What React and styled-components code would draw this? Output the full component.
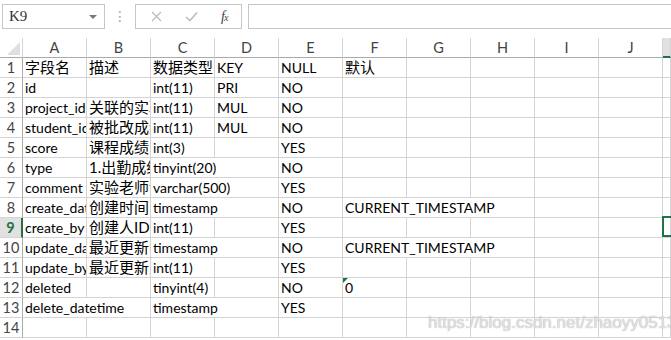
import React from 'react';
import styled, { createGlobalStyle } from 'styled-components';

const GlobalStyle = createGlobalStyle`
  html, body {
    margin: 0;
    padding: 0;
    background: #fff;
  }
`;

const Sheet = styled.div`
  position: relative;
  width: 671px;
  height: 340px;
  overflow: hidden;
  background: #fff;
  font-family: "Lato", "Noto Sans CJK SC", sans-serif;
`;

const FormulaBar = styled.div`
  display: flex;
  align-items: flex-start;
  height: 38px;
  box-sizing: border-box;
  padding: 4px 0 0 2px;
`;

const NameBox = styled.div`
  position: relative;
  width: 103px;
  height: 25px;
  box-sizing: border-box;
  border: 1px solid #c6c6c6;
  font-family: "Liberation Serif", serif;
  font-size: 15px;
  color: #333;
  padding: 3px 0 0 6px;
  &::after {
    content: "";
    position: absolute;
    right: 7px;
    top: 10px;
    border-left: 4px solid transparent;
    border-right: 4px solid transparent;
    border-top: 4px solid #777;
  }
`;

const Dots = styled.div`
  width: 30px;
  text-align: center;
  color: #a0a0a0;
  font-size: 14px;
  line-height: 25px;
  font-family: "DejaVu Sans", sans-serif;
`;

const ButtonBox = styled.div`
  display: flex;
  align-items: center;
  width: 107px;
  height: 25px;
  box-sizing: border-box;
  border: 1px solid #c6c6c6;
  padding-left: 15px;
  gap: 23px;
`;

const Fx = styled.span`
  font-family: "Liberation Serif", serif;
  font-style: italic;
  font-size: 14px;
  color: #444;
  letter-spacing: -1px;
  & sub {
    font-size: 10px;
    vertical-align: 0;
  }
`;

const FormulaInput = styled.div`
  flex: 1;
  height: 25px;
  box-sizing: border-box;
  border: 1px solid #c6c6c6;
  border-right: none;
  margin-left: 6px;
`;

const Row = styled.div`
  display: grid;
  grid-template-columns: 23px repeat(10, 64px) 1fr;
  height: 20px;
`;

const Corner = styled.div`
  position: relative;
  border-right: 1px solid #d4d4d4;
  border-bottom: 1px solid #ababab;
  &::after {
    content: "";
    position: absolute;
    right: 2px;
    bottom: 2px;
    border-left: 13px solid transparent;
    border-bottom: 13px solid #dfdfdf;
  }
`;

const ColHead = styled.div`
  display: flex;
  align-items: flex-end;
  justify-content: center;
  box-sizing: border-box;
  padding-bottom: 1px;
  font-size: 14.5px;
  color: #444;
  border-right: 1px solid #d4d4d4;
  border-bottom: ${p => (p.$active ? '2px solid #217346' : '1px solid #ababab')};
  background: ${p => (p.$active ? '#e1e1e1' : '#fff')};
`;

const RowHead = styled.div`
  display: flex;
  align-items: flex-end;
  justify-content: center;
  box-sizing: border-box;
  padding-bottom: 1px;
  font-size: 14.5px;
  color: ${p => (p.$active ? '#217346' : '#444')};
  font-weight: ${p => (p.$active ? 700 : 400)};
  background: ${p => (p.$active ? '#e1e1e1' : '#fff')};
  border-right: ${p => (p.$active ? '2px solid #217346' : '1px solid #ababab')};
  border-bottom: 1px solid #d4d4d4;
`;

const Cell = styled.div`
  position: relative;
  grid-column: span ${p => p.$span || 1};
  display: flex;
  align-items: flex-end;
  box-sizing: border-box;
  padding: 0 0 ${p => (p.$cjk ? 0 : 1)}px 2px;
  font-size: ${p => (p.$cjk ? 15 : 14)}px;
  color: #000;
  white-space: nowrap;
  overflow: hidden;
  border-right: 1px solid #d4d4d4;
  border-bottom: 1px solid #d4d4d4;
`;

const EdgeCell = styled(Cell)`
  overflow: visible;
  z-index: 2;
`;

const ErrorMark = styled.span`
  position: absolute;
  left: 0;
  top: 0;
  border-top: 5px solid #217346;
  border-right: 5px solid transparent;
`;

const Selection = styled.span`
  position: absolute;
  left: -1px;
  top: -2px;
  width: 20px;
  height: 21px;
  box-sizing: border-box;
  border: 2px solid #217346;
`;

const Watermark = styled.div`
  position: absolute;
  left: 428px;
  top: 313px;
  font-family: "Liberation Sans", sans-serif;
  font-size: 17px;
  color: rgba(235, 235, 235, 0.85);
  text-shadow: 0 0 1px #9a9a9a;
  pointer-events: none;
`;

const letters = ['A', 'B', 'C', 'D', 'E', 'F', 'G', 'H', 'I', 'J'];
const hasCjk = s => /[\u4e00-\u9fff]/.test(s || '');

// each row: [text, span] per column, missing cells are empty
const rows = [
  [['字段名'], ['描述'], ['数据类型'], ['KEY'], ['NULL'], ['默认']],
  [['id'], [''], ['int(11)'], ['PRI'], ['NO']],
  [['project_id'], ['关联的实验项目ID'], ['int(11)'], ['MUL'], ['NO']],
  [['student_id'], ['被批改成绩的学生ID'], ['int(11)'], ['MUL'], ['NO']],
  [['score'], ['课程成绩'], ['int(3)'], [''], ['YES']],
  [['type'], ['1.出勤成绩 2.实验成绩'], ['tinyint(20)', 2], ['NO']],
  [['comment'], ['实验老师评语'], ['varchar(500)', 2], ['YES']],
  [['create_datetime'], ['创建时间'], ['timestamp', 2], ['NO'], ['CURRENT_TIMESTAMP', 3]],
  [['create_by'], ['创建人ID'], ['int(11)'], [''], ['YES']],
  [['update_datetime'], ['最近更新时间'], ['timestamp', 2], ['NO'], ['CURRENT_TIMESTAMP', 3]],
  [['update_by'], ['最近更新人ID'], ['int(11)'], [''], ['YES']],
  [['deleted'], [''], ['tinyint(4)'], [''], ['NO'], ['0']],
  [['delete_datetime', 2], ['timestamp', 2], ['YES']],
  [],
];

function CancelIcon() {
  return (
    <svg width="11" height="11" viewBox="0 0 11 11">
      <path d="M1 1 L10 10 M10 1 L1 10" stroke="#bdbdbd" strokeWidth="1.3" fill="none" />
    </svg>
  );
}

function CheckIcon() {
  return (
    <svg width="13" height="11" viewBox="0 0 13 11">
      <path d="M1 6 L5 9.5 L12 1.5" stroke="#bdbdbd" strokeWidth="1.6" fill="none" />
    </svg>
  );
}

function DataRow({ index, cells }) {
  const out = [];
  let col = 0;
  cells.forEach(([text, span = 1], i) => {
    const isErr = index === 12 && col === 5;
    out.push(
      <Cell key={i} $span={span} $cjk={hasCjk(text)}>
        {isErr && <ErrorMark />}
        {text}
      </Cell>
    );
    col += span;
  });
  for (; col < 10; col++) {
    out.push(<Cell key={'e' + col} />);
  }
  const active = index === 9;
  return (
    <Row>
      <RowHead $active={active}>{index}</RowHead>
      {out}
      <EdgeCell>{active && <Selection />}</EdgeCell>
    </Row>
  );
}

export default function App() {
  return (
    <Sheet>
      <GlobalStyle />
      <FormulaBar>
        <NameBox>K9</NameBox>
        <Dots>⋮</Dots>
        <ButtonBox>
          <CancelIcon />
          <CheckIcon />
          <Fx>f<sub>x</sub></Fx>
        </ButtonBox>
        <FormulaInput />
      </FormulaBar>
      <Row>
        <Corner />
        {letters.map(l => (
          <ColHead key={l}>{l}</ColHead>
        ))}
        <ColHead $active />
      </Row>
      {rows.map((cells, i) => (
        <DataRow key={i} index={i + 1} cells={cells} />
      ))}
      <Watermark>https://blog.csdn.net/zhaoyy0513</Watermark>
    </Sheet>
  );
}
